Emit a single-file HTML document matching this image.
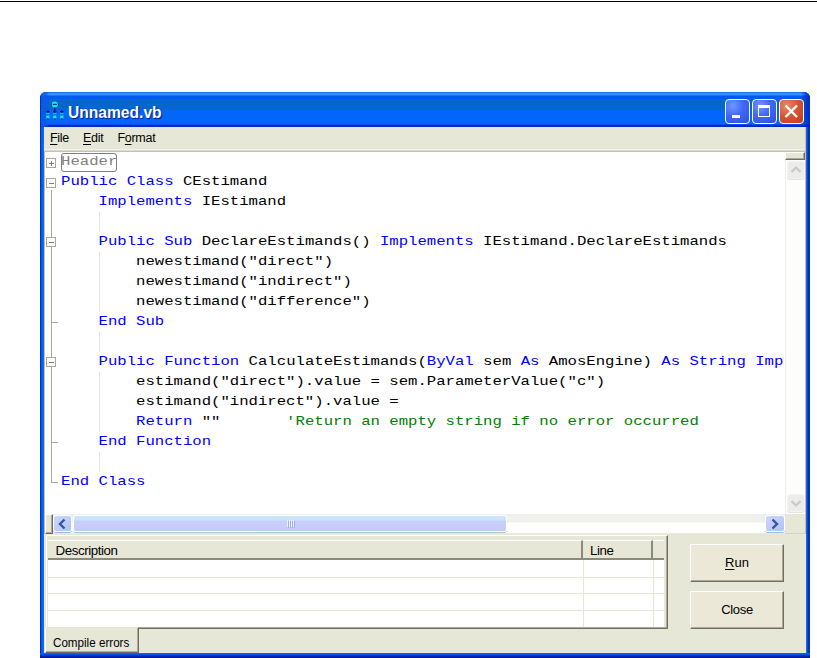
<!DOCTYPE html>
<html>
<head>
<meta charset="utf-8">
<title>Unnamed.vb</title>
<style>
html,body{margin:0;padding:0;background:#fff;}
body{width:817px;height:658px;position:relative;overflow:hidden;font-family:"Liberation Sans",sans-serif;}
.abs{position:absolute;}
u{text-underline-offset:1.5px;}
#topline{left:0;top:1px;width:817px;height:1px;background:#000;}
#corners{left:40px;top:92px;width:8px;height:8px;background:#e7e7d7;}
#win{left:40px;top:92px;width:770px;height:566px;background:#0046e0;border-radius:6px 6px 0 0;overflow:hidden;}
#title{left:0;top:0;width:770px;height:35px;
 background:linear-gradient(to bottom,#0a5fe8 0px,#3592ff 1.5px,#3592ff 3px,#0059f0 4px,#0059f0 7px,#0566cd 7.5px,#0566cd 17.5px,#0366fc 18px,#0366fc 32px,#0327c0 33.5px,#0327c0 35px);}
#tvig{left:0;top:0;width:770px;height:35px;background:linear-gradient(to right,rgba(0,40,200,.9) 0,rgba(0,40,200,.9) 1px,rgba(8,90,232,.85) 1.5px,rgba(8,90,232,.8) 6px,rgba(8,90,232,0) 9px,rgba(0,48,200,0) 761px,rgba(0,40,200,.7) 766px,rgba(0,32,190,.85) 770px);}
#ttext{left:27.5px;top:11px;color:#fff;font-weight:bold;font-size:16px;line-height:20px;text-shadow:1px 1px 1px #0a1883;white-space:nowrap;transform-origin:0 0;transform:scaleX(0.975);}
.cb{top:7px;width:24.5px;height:25px;border:1px solid #fff;border-radius:4px;box-sizing:border-box;background:radial-gradient(circle at 30% 25%,#6f97ff 0%,#3f68f5 45%,#2c50e0 100%);}
#cclose{background:radial-gradient(circle at 30% 25%,#e88a6c 0%,#d4532f 50%,#c13a1c 100%);}
#lb{top:35px;width:4px;height:531px;background:linear-gradient(to right,#0030d0 0,#0030d0 1px,#0458f0 1px,#0458f0 2px,#0566ea 2px,#0566ea 3px,#1c6ad8 3px);}
#rb{top:35px;width:4px;height:531px;background:linear-gradient(to right,#1a6ae8 0,#1a6ae8 1px,#0448e0 1px,#0448e0 2px,#0030c0 2px,#0030c0 3px,#0c36b4 3px);}
#bb{left:0;top:561px;width:770px;height:5px;background:linear-gradient(to bottom,#0a60f0 0,#0a60f0 1px,#0450e8 1px,#0450e8 2px,#0038d0 2px,#0038d0 3px,#0028b0 3px,#0028b0 4px,#001a90 4px);}
#redge{left:761px;top:0;width:1px;height:526px;background:#c6c0a2;}
#ledge{left:0;top:25px;width:1px;height:382px;background:#c6c0a2;}
#client{left:4px;top:35px;width:762px;height:526px;background:#e7e7d7;}
#menu{left:0;top:0;width:762px;height:23px;background:#e7e7d7;font-size:12.5px;color:#000;}
#menu span{position:absolute;top:3px;line-height:16px;white-space:nowrap;letter-spacing:-0.3px;}
#sep{left:0;top:22px;width:762px;height:3px;background:linear-gradient(to bottom,#f3f2ec 0,#f3f2ec 1px,#dcd9cc 1px,#dcd9cc 2px,#c6c2b2 2px);}
#code{left:0;top:25px;width:741px;height:362px;background:#fff;overflow:hidden;}
#code pre{margin:0;position:absolute;left:17px;top:0px;font-family:"Liberation Mono",monospace;font-size:13.5px;line-height:20px;transform-origin:0 0;transform:scaleX(1.1578);color:#000;white-space:pre;}
.k{color:#0000ff;}
.c{color:#008000;}
.g{color:#808080;}
.fb{left:2px;width:10px;height:10px;border:1px solid #aca899;box-sizing:border-box;background:#fff;}
.fb i{position:absolute;left:1.5px;top:3.5px;width:5px;height:1px;background:#808080;}
.fb b{position:absolute;left:3.5px;top:1.5px;width:1px;height:5px;background:#808080;}
.fl{background:#aca899;}
.ig{background:#e4e4e4;width:1px;}
#hdrbox{left:17px;top:1px;width:56px;height:19px;border:1px solid #808080;border-radius:3px;box-sizing:border-box;}
#vs{left:741px;top:25px;width:20px;height:362px;background:#fdfdfb;border-left:1px solid #eeeeea;box-sizing:border-box;}
#hs{left:0;top:387px;width:741px;height:20px;background:linear-gradient(to bottom,#f0f0ee 0,#f0f0ee 8px,#fefefb 9px,#ffffff 19px,#d8d4c0 20px);}
#corner{left:741px;top:387px;width:21px;height:20px;background:#e7e7d7;box-sizing:border-box;border-bottom:1px solid #d8d4c0;}
#panel{left:0;top:407px;width:762px;height:119px;background:#e7e7d7;}
.btn{background:#ebe8d8;border:1px solid;border-color:#fff #716f64 #716f64 #fff;box-shadow:inset -1px -1px 0 #aca899;font-size:13px;text-align:center;color:#000;box-sizing:border-box;}
.sbtn{border-radius:3px;box-sizing:border-box;}

.raised{background:#e7e7d7;box-sizing:border-box;border:1px solid;border-color:#fff #716f64 #716f64 #fff;box-shadow:inset -1px -1px 0 #aca899;}
.sb{box-sizing:border-box;border:1px solid #fff;border-radius:3px;box-shadow:0 1px 0 #9fb8e0;background:linear-gradient(to bottom right,#cdd6fd,#bccbf8 60%,#aac3f2);}
.sbd{box-sizing:border-box;border:1px solid #f4f4f0;border-radius:3px;background:#ececea;box-shadow:0 1px 0 #e4e4e0;}
#thumb{left:29px;top:1px;width:434px;height:17px;box-sizing:border-box;border:1px solid #fff;border-radius:3px;box-shadow:0 1px 0 #a9c6cc;background:linear-gradient(to bottom,#cbe6fc 0,#cbe4fc 4px,#c9cffb 5px,#c8cbfa 13px,#b4ccea 15px);}
#lvbox{left:2px;top:1px;width:622px;height:94px;box-sizing:border-box;border:1px solid;border-color:#fff #716f64 #716f64 #fff;box-shadow:inset -1px -1px 0 #aca899;background:#e7e7d7;}
#lv{left:4px;top:6px;width:616px;height:87px;background:#fff;overflow:hidden;}
.hd{top:0;height:20px;box-sizing:border-box;background:#e7e7d7;border-bottom:2px solid #8d8a7c;border-right:2px solid #8d8a7c;border-top:1px solid #fff;font-size:13.3px;line-height:15px;padding:2px 0 0 7.5px;letter-spacing:-0.4px;white-space:nowrap;}
.gl{background:#e7e7d7;}
#tab{left:1px;top:93px;width:94px;height:26px;box-sizing:border-box;background:#e7e7d7;border:1px solid;border-color:transparent #716f64 #716f64 #fff;box-shadow:inset -1px -1px 0 #aca899;font-size:13.3px;line-height:15px;padding:7px 0 0 7px;white-space:nowrap;}
#tab span{display:inline-block;transform-origin:0 50%;transform:scaleX(0.875);}
</style>
</head>
<body>
<div id="topline" class="abs"></div>
<div id="corners" class="abs"></div>
<div id="win" class="abs">
 <div id="title" class="abs">
  <div id="tvig" class="abs"></div>
  <svg class="abs" style="left:5px;top:8px" width="20" height="22" viewBox="0 0 20 22">
   <rect x="9.2" y="5" width="1.2" height="7" fill="#0a1a50"/>
   <ellipse cx="9.8" cy="4.6" rx="3.9" ry="2" fill="#0a2a70"/>
   <ellipse cx="9.8" cy="4.5" rx="3.1" ry="3" fill="#19e6ec"/>
   <rect x="7.8" y="3.8" width="4" height="1.1" fill="#0a2a70"/>
   <g fill="#0a1a50"><rect x="1" y="11" width="3.6" height="1.2"/><rect x="2.3" y="10" width="1.1" height="5"/><rect x="8" y="11" width="3.6" height="1.2"/><rect x="9.2" y="10" width="1.1" height="5"/><rect x="15" y="11" width="3.6" height="1.2"/><rect x="16.3" y="10" width="1.1" height="5"/></g>
   <g fill="#19e6ec"><rect x="1.2" y="13.2" width="3.2" height="1.2"/><rect x="1.2" y="15.5" width="3.2" height="3"/><rect x="8.2" y="13.2" width="3.2" height="1.2"/><rect x="8.2" y="15.5" width="3.2" height="3"/><rect x="15.2" y="13.2" width="3.2" height="1.2"/><rect x="15.2" y="15.5" width="3.2" height="3"/></g>
   <g fill="#0a1a50"><rect x="2" y="18.5" width="1.6" height="1"/><rect x="9" y="18.5" width="1.6" height="1"/><rect x="16" y="18.5" width="1.6" height="1"/></g>
  </svg>
  <div id="ttext" class="abs">Unnamed.vb</div>
  <div class="abs cb" style="left:685px"><div class="abs" style="left:5.5px;top:14.5px;width:8px;height:3px;background:#fff"></div></div>
  <div class="abs cb" style="left:712.3px"><div class="abs" style="left:5px;top:5px;width:12px;height:12px;border:1px solid #fff;border-top-width:3px;box-sizing:border-box"></div></div>
  <div class="abs cb" id="cclose" style="left:739.3px"><svg class="abs" style="left:0;top:0" width="23" height="23"><path d="M5.5 5.5 L17 17 M17 5.5 L5.5 17" stroke="#fff" stroke-width="2.4" fill="none"/></svg></div>
 </div>
 <div id="lb" class="abs" style="left:0"></div>
 <div id="rb" class="abs" style="left:766px"></div>
 <div id="bb" class="abs"></div>
 <div id="client" class="abs">
  <div id="menu" class="abs"><span style="left:6px"><u>F</u>ile</span><span style="left:39px"><u>E</u>dit</span><span style="left:73.5px">F<u>o</u>rmat</span></div>
  <div id="sep" class="abs"></div>
  <div id="code" class="abs">
   <div id="hdrbox" class="abs"></div>
   <div class="abs fl" style="left:6.5px;top:38px;width:1px;height:293px"></div>
   <div class="abs fl" style="left:7px;top:330px;width:7px;height:1px"></div>
   <div class="abs fl" style="left:7px;top:170px;width:7px;height:1px"></div>
   <div class="abs fl" style="left:7px;top:290px;width:7px;height:1px"></div>
   <div class="abs fb" style="top:6px"><i></i><b></b></div>
   <div class="abs fb" style="top:26px"><i></i></div>
   <div class="abs fb" style="top:85px"><i></i></div>
   <div class="abs fb" style="top:205px"><i></i></div>
   <div class="abs ig" style="left:55px;top:60px;height:20px"></div>
   <div class="abs ig" style="left:55px;top:100px;height:60px"></div>
   <div class="abs ig" style="left:55px;top:180px;height:20px"></div>
   <div class="abs ig" style="left:55px;top:220px;height:60px"></div>
   <div class="abs ig" style="left:55px;top:300px;height:20px"></div>
<pre><span class="g">Header</span>
<span class="k">Public Class</span> CEstimand
    <span class="k">Implements</span> IEstimand

    <span class="k">Public Sub</span> DeclareEstimands() <span class="k">Implements</span> IEstimand.DeclareEstimands
        newestimand("direct")
        newestimand("indirect")
        newestimand("difference")
    <span class="k">End Sub</span>

    <span class="k">Public Function</span> CalculateEstimands(<span class="k">ByVal</span> sem <span class="k">As</span> AmosEngine) <span class="k">As String Imp</span>
        estimand("direct").value = sem.ParameterValue("c")
        estimand("indirect").value =
        <span class="k">Return</span> ""       <span class="c">'Return an empty string if no error occurred</span>
    <span class="k">End Function</span>

<span class="k">End Class</span></pre>
  </div>
  <div id="vs" class="abs">
   <div class="abs raised" style="left:-1px;top:0;width:20px;height:8px"></div>
   <div class="abs sbd" style="left:1px;top:9px;width:18px;height:18px"><svg class="abs" style="left:0;top:0" width="16" height="16"><path d="M3.5 10 L8 5.5 L12.5 10" stroke="#c9c9c6" stroke-width="2.2" fill="none"/></svg></div>
   <div class="abs sbd" style="left:1px;top:342px;width:18px;height:18px"><svg class="abs" style="left:0;top:0" width="16" height="16"><path d="M3.5 6 L8 10.5 L12.5 6" stroke="#c9c9c6" stroke-width="2.2" fill="none"/></svg></div>
  </div>
  <div id="hs" class="abs">
   <div class="abs raised" style="left:1px;top:0;width:8px;height:20px"></div>
   <div class="abs sb" style="left:9px;top:1px;width:19px;height:17px"><svg class="abs" style="left:0;top:0" width="17" height="16"><path d="M10.5 3.5 L6 8 L10.5 12.5" stroke="#35569a" stroke-width="2.4" fill="none"/></svg></div>
   <div id="thumb" class="abs"><div class="abs" style="left:213px;top:4px;width:1px;height:7px;background:#eef4ff;box-shadow:2px 0 0 #eef4ff,4px 0 0 #eef4ff,6px 0 0 #eef4ff,1px 1px 0 #9fb0e8,3px 1px 0 #9fb0e8,5px 1px 0 #9fb0e8,7px 1px 0 #9fb0e8"></div></div>
   <div class="abs sb" style="left:721px;top:1px;width:20px;height:17px"><svg class="abs" style="left:0;top:0" width="17" height="16"><path d="M6.5 3.5 L11 8 L6.5 12.5" stroke="#35569a" stroke-width="2.4" fill="none"/></svg></div>
  </div>
  <div id="corner" class="abs"></div>
  <div id="redge" class="abs"></div>
  <div id="ledge" class="abs"></div>
  <div id="panel" class="abs">
   <div id="lvbox" class="abs"></div>
   <div id="lv" class="abs">
    <div class="abs hd" style="left:0;width:535px">Description</div>
    <div class="abs hd" style="left:535px;width:70px;padding-left:7px">Line</div>
    <div class="abs hd" style="left:605px;width:11px;border-right:none;padding:0"></div>
    <div class="abs gl" style="left:0;top:37px;width:616px;height:1px"></div>
    <div class="abs gl" style="left:0;top:53px;width:616px;height:1px"></div>
    <div class="abs gl" style="left:0;top:70px;width:616px;height:1px"></div>
    <div class="abs gl" style="left:535px;top:20px;width:1px;height:68px"></div>
    <div class="abs gl" style="left:605px;top:20px;width:1px;height:68px"></div>
   </div>
   <div id="tab" class="abs"><span>Compile errors</span></div>
   <div class="abs btn" style="left:646px;top:10px;width:94px;height:38px;line-height:36px;"><u>R</u>un</div>
   <div class="abs btn" style="left:646px;top:57px;width:94px;height:38px;line-height:36px;letter-spacing:-0.3px">Close</div>
  </div>
 </div>
</div>
</body>
</html>
